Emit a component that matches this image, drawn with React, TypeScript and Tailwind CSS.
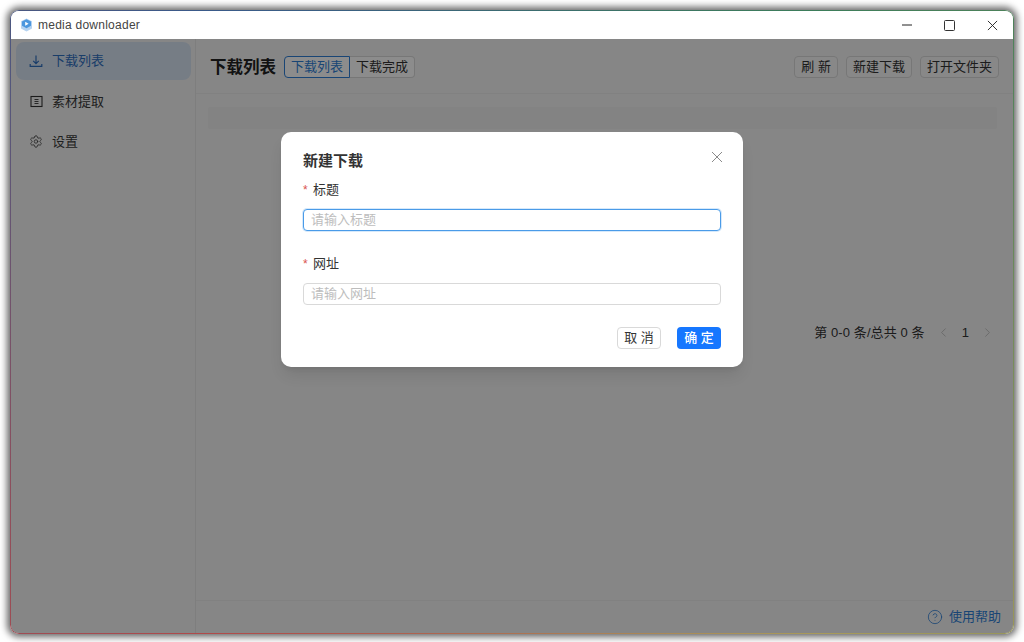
import { Settings, CircleHelp, ChevronLeft, ChevronRight } from "lucide-react";

const font = "font-['Liberation_Sans','Noto_Sans_CJK_SC',sans-serif]";

const NavItem = ({ icon, title, active }: { icon: React.ReactNode; title: string; active?: boolean }) => (
  <div
    className={`flex items-center pl-[13px] gap-[9px] rounded-lg text-[13px] ${
      active ? "h-[38px] bg-[#d8e4f3] text-[#2f6fc0]" : "h-[37px] text-[#3a3a3a]"
    }`}
  >
    <span className="w-[14px] flex justify-center">{icon}</span>
    <span>{title}</span>
  </div>
);

const ToolButton = ({ title }: { title: string }) => (
  <button className="h-[22px] px-[6px] border border-[#d9d9d9] rounded-[4px] text-[13px] text-[#333] bg-[#f7f7f7]">
    {title}
  </button>
);

const Cross = ({ size, color }: { size: number; color: string }) => (
  <svg width={size} height={size} viewBox="0 0 12 12" stroke={color} strokeWidth="1" fill="none">
    <path d="M1 1l10 10M11 1L1 11" />
  </svg>
);

const Field = ({ label, placeholder, focused }: { label: string; placeholder: string; focused?: boolean }) => (
  <div>
    <div className="h-[20px] flex items-center text-[13px] text-[#333]">
      <span className="text-[#d9534f] w-[10px] text-[12px]">*</span>
      {label}
    </div>
    <div
      className={`mt-[9px] h-[22px] flex items-center px-[7px] rounded-[4px] border bg-white text-[13px] text-[#bdbdbd] ${
        focused ? "border-[#4a9be8] shadow-[0_0_0_1px_#d6e9fb]" : "border-[#d9d9d9]"
      }`}
    >
      {placeholder}
    </div>
  </div>
);

const App = () => {
  return (
    <div className={`w-[1024px] h-[642px] bg-white p-[10px] pb-[8px] ${font}`}>
      <div className="h-full rounded-[9px] p-[1px] bg-[conic-gradient(from_45deg,#3d7d5a,#a89a5a,#b04a4a,#3a5a8a,#3d7d5a)] shadow-[0_0_7px_3px_rgba(0,0,0,0.6)]">
        <div className="relative h-full rounded-[8px] overflow-hidden bg-[#f5f5f5] flex flex-col">
          <div className="h-[28px] bg-white flex items-center shrink-0">
            <svg width="13" height="14" viewBox="0 0 13 14" className="ml-[9px]">
              <path d="M6.5 0.5 12 3.2v7.2L6.5 13.5 1 10.4V3.2z" fill="#b5d3f1" />
              <path d="M6.5 1.2 11 3.6v4.2L6.5 10.2 2 7.8V3.6z" fill="#4c97de" />
              <path d="M5.2 3.7 8.6 5.7 5.2 7.7z" fill="#fff" />
            </svg>
            <span className="ml-[5px] text-[12px] tracking-[0.25px] text-[#444]">media downloader</span>
            <div className="ml-auto flex items-center">
              <svg width="10" height="2" viewBox="0 0 10 2" stroke="#222" strokeWidth="1" className="mr-[32px]">
                <path d="M0 1h10" />
              </svg>
              <svg width="11" height="11" viewBox="0 0 11 11" stroke="#333" strokeWidth="1" fill="none" className="mr-[32px]">
                <rect x="0.5" y="0.5" width="10" height="10" rx="1" />
              </svg>
              <span className="mr-[15px] flex"><Cross size={11} color="#222" /></span>
            </div>
          </div>
          <div className="flex flex-1 min-h-0">
            <aside className="w-[185px] shrink-0 border-r border-[#e6e6e6] pl-[5px] pr-[4px] pt-[3px] flex flex-col gap-[3px]">
              <NavItem
                active
                title="下载列表"
                icon={
                  <svg width="14" height="14" viewBox="0 0 14 14" fill="none" stroke="currentColor" strokeWidth="1.2">
                    <path d="M7 1.5v8M4.2 6.8 7 9.6l2.8-2.8M1.2 10v2.3h11.6V10" />
                  </svg>
                }
              />
              <NavItem
                title="素材提取"
                icon={
                  <svg width="13" height="13" viewBox="0 0 13 13" fill="none" stroke="#333" strokeWidth="1.1">
                    <rect x="1" y="1.5" width="11" height="10" />
                    <path d="M4.5 4.5h4M4.5 6.5h4M4.5 8.5h4" strokeWidth="0.9" />
                  </svg>
                }
              />
              <NavItem title="设置" icon={<Settings size={15} strokeWidth={1.3} />} />
            </aside>
            <main className="flex-1 flex flex-col min-w-0">
              <div className="h-[55px] shrink-0 border-b border-[#ececec] flex items-center pl-[14px] pr-[14px] pt-[2px]">
                <span className="text-[16.5px] font-bold text-[#222] mr-[8px]">下载列表</span>
                <div className="flex text-[13px]">
                  <span className="h-[22px] px-[6px] flex items-center border border-[#2f7fd6] rounded-l-[4px] text-[#2f7fd6] bg-white">下载列表</span>
                  <span className="h-[22px] px-[6px] flex items-center border border-l-0 border-[#d9d9d9] rounded-r-[4px] text-[#333] bg-white">下载完成</span>
                </div>
                <div className="ml-auto flex gap-[8px]">
                  <ToolButton title="刷 新" />
                  <ToolButton title="新建下载" />
                  <ToolButton title="打开文件夹" />
                </div>
              </div>
              <div className="flex-1 pl-[12px] pr-[16px] pt-[13px]">
                <div className="h-[22px] bg-[#eeeeee] rounded-[2px]" />
                <div className="mt-[194px] flex items-center justify-end pr-[2px] text-[13px] tracking-[0.1px] text-[#333]">
                  <span>第 0-0 条/总共 0 条</span>
                  <ChevronLeft size={15} strokeWidth={1.1} className="ml-[11px] text-[#aaa]" />
                  <span className="mx-[11px]">1</span>
                  <ChevronRight size={15} strokeWidth={1.1} className="text-[#aaa]" />
                </div>
              </div>
              <div className="h-[33px] shrink-0 border-t border-[#ececec] flex items-center justify-end pr-[12px] text-[13px] text-[#2f7fd6] gap-[6px]">
                <CircleHelp size={16} strokeWidth={1.2} />
                <span>使用帮助</span>
              </div>
            </main>
          </div>
          <div className="absolute inset-x-0 top-[28px] bottom-0 bg-black/45" />
          <div className="absolute left-[270px] top-[121px] w-[462px] h-[235px] bg-white rounded-[10px] pt-[19px] px-[22px] shadow-lg">
            <span className="absolute right-[20px] top-[19px] flex"><Cross size={12} color="#8a8a8a" /></span>
            <div className="text-[15px] font-bold leading-[20px] text-[#333]">新建下载</div>
            <div className="mt-[9px] flex flex-col gap-[23px]">
              <Field focused label="标题" placeholder="请输入标题" />
              <Field label="网址" placeholder="请输入网址" />
            </div>
            <div className="mt-[22px] flex justify-end gap-[16px]">
              <button className="w-[44px] h-[22px] border border-[#d9d9d9] rounded-[4px] bg-white text-[13px] text-[#333]">取 消</button>
              <button className="w-[44px] h-[22px] rounded-[4px] bg-[#1677ff] text-[13px] text-white font-medium">确 定</button>
            </div>
          </div>
        </div>
      </div>
    </div>
  );
};

export default App;
